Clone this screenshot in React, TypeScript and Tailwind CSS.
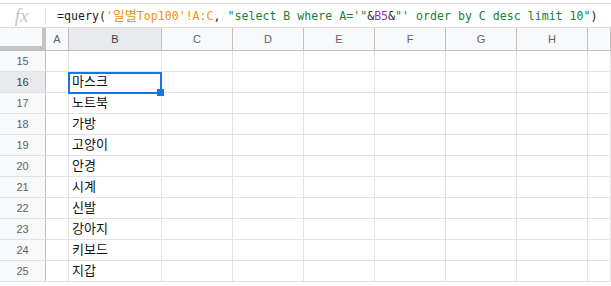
const columns = [
  { label: "A", width: "w-[23px]" },
  { label: "B", width: "w-[93px]" },
  { label: "C", width: "w-[71px]" },
  { label: "D", width: "w-[71px]" },
  { label: "E", width: "w-[71px]" },
  { label: "F", width: "w-[71px]" },
  { label: "G", width: "w-[71px]" },
  { label: "H", width: "w-[71px]" },
  { label: "", width: "flex-1" },
];

const rows = [
  { num: 15, value: "" },
  { num: 16, value: "마스크" },
  { num: 17, value: "노트북" },
  { num: 18, value: "가방" },
  { num: 19, value: "고양이" },
  { num: 20, value: "안경" },
  { num: 21, value: "시계" },
  { num: 22, value: "신발" },
  { num: 23, value: "강아지" },
  { num: 24, value: "키보드" },
  { num: 25, value: "지갑" },
];

const FormulaBar = () => (
  <div className="pt-[3px] bg-white">
    <div className="h-[25px] border-y border-[#dadce0] flex items-center">
      <div className="w-[45px] flex items-center justify-center">
        <span className="font-['Liberation_Serif',serif] italic text-[19px] text-[#c4c4c4] leading-none -ml-[2px]">
          fx
        </span>
      </div>
      <div className="w-px h-[14px] bg-[#dadce0]" />
      <div className="pl-[11px] font-['DejaVu_Sans_Mono','Noto_Sans_CJK_KR',monospace] text-[11.6px] text-[#202124] whitespace-nowrap leading-none">
        =query(
        <span className="text-[#f09300]">
          '<span className="text-[13px]">일별</span>Top100'!A:C
        </span>
        , <span className="text-[#188038]">"select B where A='"</span>
        &amp;<span className="text-[#9334b0]">B5</span>&amp;
        <span className="text-[#188038]">"' order by C desc limit 10"</span>)
      </div>
    </div>
  </div>
);

const App = () => {
  return (
    <div className="w-[611px] h-[286px] overflow-hidden bg-white font-['Liberation_Sans','Noto_Sans_CJK_KR',sans-serif]">
      <FormulaBar />

      {/* column headers */}
      <div className="flex h-[23px] bg-[#f8f9fa] border-b border-[#c0c0c0]">
        <div className="w-[46px] bg-[#f8f9fa] border-r-4 border-[#c4c4c4] relative">
          <div className="absolute left-0 right-0 bottom-0 h-[4px] bg-[#c4c4c4]" />
        </div>
        {columns.map((col) => (
          <div
            key={col.label || "rest"}
            className={`${col.width} shrink-0 flex items-center justify-center border-r border-[#c0c0c0] text-[11px] ${
              col.label === "B" ? "bg-[#e8eaed] text-[#3c4043]" : "text-[#5f6368]"
            }`}
          >
            {col.label}
          </div>
        ))}
      </div>

      {/* rows */}
      {rows.map((row) => (
        <div key={row.num} className="flex h-[21px] border-b border-[#e2e2e2]">
          <div
            className={`w-[46px] shrink-0 flex items-center justify-center border-r border-[#c0c0c0] text-[11px] ${
              row.num === 16 ? "bg-[#e8eaed] text-[#3c4043]" : "bg-[#f8f9fa] text-[#5f6368]"
            }`}
          >
            {row.num}
          </div>
          {columns.map((col) => (
            <div
              key={col.label || "rest"}
              className={`${col.width} shrink-0 border-r border-[#e2e2e2] relative flex items-center`}
            >
              {col.label === "B" && (
                <span className="pl-[3px] text-[13px] text-[#111] whitespace-nowrap">{row.value}</span>
              )}
              {col.label === "B" && row.num === 16 && (
                <>
                  <div className="absolute -left-[1px] top-0 w-[94px] h-[22px] border-2 border-[#1a73e8] z-10" />
                  <div className="absolute left-[88px] top-[17px] w-[7px] h-[7px] bg-[#1a73e8] z-20" />
                </>
              )}
            </div>
          ))}
        </div>
      ))}
    </div>
  );
};

export default App;
